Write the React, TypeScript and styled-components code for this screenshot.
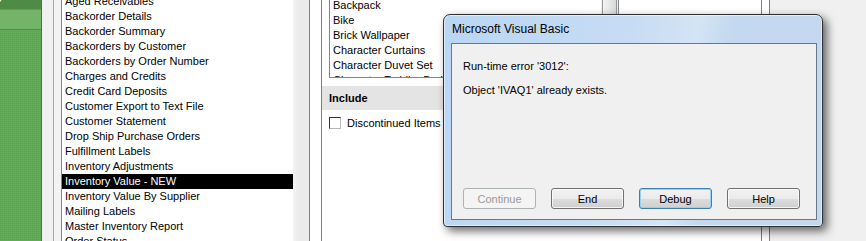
import styled, { createGlobalStyle } from "styled-components";

const GlobalStyle = createGlobalStyle`
  html, body {
    margin: 0;
    padding: 0;
    background: #f0f0f0;
    overflow: hidden;
  }
  body {
    font-family: "Liberation Sans", Arial, sans-serif;
    font-size: 11px;
    color: #000;
  }
  * { box-sizing: border-box; }
`;

const Screen = styled.div`
  position: relative;
  width: 866px;
  height: 241px;
  overflow: hidden;
  display: flex;
  background: #f0f0f0;
`;

/* green nav strip on the far left */
const Sidebar = styled.aside`
  width: 42px;
  flex: none;
  display: flex;
  flex-direction: column;
  border-right: 1px solid #3f7b39;
  background-color: #63aa59;
  background-image: linear-gradient(
      45deg,
      rgba(0, 0, 0, 0.05) 25%,
      transparent 25%,
      transparent 75%,
      rgba(0, 0, 0, 0.05) 75%
    );
  background-size: 2px 2px;
`;

const SideHead = styled.div`
  height: 10px;
  background: #4e8c46;
  border-bottom: 1px solid #5f9d57;
  overflow: hidden;
  color: #fff;
  font-weight: bold;
  font-size: 12px;
  line-height: 12px;
`;

const SideHeadText = styled.div`
  margin: -8px 0 0 -44px;
`;

const SideBand = styled.div`
  height: 20px;
  background: #73b468;
  border-bottom: 1px solid #4f8e48;
`;

const Gutter = styled.div<{ $w: number; $bg?: string }>`
  width: ${(p) => p.$w}px;
  flex: none;
  background: ${(p) => p.$bg ?? "#f0f0f0"};
`;

const ListWell = styled.div`
  flex: none;
  padding-left: 7px;
  border-left: 1px solid #a9a9a9;
  background: #f3f3f3;
`;

const ListBox = styled.div`
  width: 232px;
  height: 100%;
  background: #fff;
  border-left: 1px solid #828790;
  overflow: hidden;
`;

const Rows = styled.div<{ $offset: number }>`
  margin-top: ${(p) => p.$offset}px;
`;

const Row = styled.div<{ $selected?: boolean }>`
  height: 15px;
  line-height: 15px;
  padding-left: 3px;
  white-space: nowrap;
  background: ${(p) => (p.$selected ? "#000" : "transparent")};
  color: ${(p) => (p.$selected ? "#fff" : "#000")};
`;

const GapStrip = styled.div`
  width: 16px;
  flex: none;
  background: linear-gradient(to right, #f4f4f4, #ebebeb 30%, #ececec);
`;

const MidPanel = styled.div`
  flex: none;
  width: 461px;
  background: #fff;
  border-left: 1px solid #7f7f7f;
  border-right: 1px solid #7f7f7f;
  padding: 0 7px 0 11px;
`;

const Group = styled.div`
  height: 100%;
  border-left: 1px solid #7f7f7f;
  border-right: 1px solid #7f7f7f;
  display: flex;
  flex-direction: column;
`;

const ItemList = styled.div`
  margin-left: 7px;
  width: 290px;
  height: 78px;
  flex: none;
  border: 1px solid #828790;
  border-top: none;
  display: flex;
  overflow: hidden;
`;

const ItemRows = styled.div`
  flex: 1;
  margin-top: -2px;
`;

const ScrollTrack = styled.div`
  width: 17px;
  flex: none;
  background: #f0f0f0;
  padding: 0 1px;
`;

const Thumb = styled.div`
  margin-top: -10px;
  height: 50px;
  border: 1px solid #979797;
  border-radius: 2px;
  background: linear-gradient(to right, #f4f4f4, #e6e6e6 50%, #d8d8d8);
`;

const SectionHead = styled.div`
  margin-top: 8px;
  height: 24px;
  line-height: 24px;
  padding-left: 7px;
  background: #e4e4e4;
  font-weight: bold;
`;

const CheckRow = styled.label`
  margin: 7px 0 0 7px;
  display: flex;
  align-items: center;
  gap: 6px;
`;

const CheckBox = styled.span`
  width: 12px;
  height: 12px;
  background: #fff;
  border: 1px solid;
  border-color: #333 #b5b5b5 #b5b5b5 #333;
`;

/* the Visual Basic error window, floating over the form */
const Dialog = styled.div`
  position: absolute;
  left: 443px;
  top: 14px;
  width: 380px;
  height: 213px;
  border: 1px solid #2d2f33;
  border-radius: 7px 7px 4px 4px;
  padding: 0 5px 6px 7px;
  display: flex;
  flex-direction: column;
  background: linear-gradient(
    100deg,
    #b9d6f5 0%,
    #c6dcf3 45%,
    #d3e4f5 62%,
    #c3d9ef 70%,
    #c4d8ee 100%
  );
  box-shadow: inset 0 0 0 1px rgba(255, 255, 255, 0.55),
    4px 4px 10px rgba(0, 0, 0, 0.6);
`;

const TitleBar = styled.div`
  height: 28px;
  flex: none;
  display: flex;
  align-items: center;
  padding-left: 1px;
  font-size: 12px;
  color: #000;
`;

const Content = styled.div`
  flex: 1;
  background: #f0f0f0;
  border: 1px solid #6b7787;
  padding: 16px 10px 10px 11px;
  display: flex;
  flex-direction: column;
`;

const Message = styled.div<{ $gap?: number }>`
  line-height: 13px;
  margin-top: ${(p) => p.$gap ?? 0}px;
`;

const ButtonRow = styled.div`
  margin-top: auto;
  display: flex;
  gap: 15px;
`;

const Button = styled.button<{ $default?: boolean }>`
  width: 73px;
  height: 21px;
  padding: 0;
  font-family: inherit;
  font-size: 11px;
  color: #000;
  border: 1px solid ${(p) => (p.$default ? "#3c7fb1" : "#707070")};
  border-radius: 3px;
  background: linear-gradient(#f2f2f2 0%, #ebebeb 50%, #dddddd 50%, #cfcfcf 100%);
  box-shadow: inset 0 0 0 1px
    ${(p) => (p.$default ? "#8fd3f7" : "rgba(255, 255, 255, 0.75)")};

  &:disabled {
    color: #9a9a9a;
    border-color: #adb2b5;
    background: #f4f4f4;
    box-shadow: none;
  }
`;

const reports = [
  "Aged Receivables",
  "Backorder Details",
  "Backorder Summary",
  "Backorders by Customer",
  "Backorders by Order Number",
  "Charges and Credits",
  "Credit Card Deposits",
  "Customer Export to Text File",
  "Customer Statement",
  "Drop Ship Purchase Orders",
  "Fulfillment Labels",
  "Inventory Adjustments",
  "Inventory Value - NEW",
  "Inventory Value By Supplier",
  "Mailing Labels",
  "Master Inventory Report",
  "Order Status",
];

const items = [
  "Backpack",
  "Bike",
  "Brick Wallpaper",
  "Character Curtains",
  "Character Duvet Set",
  "Character Toddler Bed",
];

export default function App() {
  return (
    <Screen>
      <GlobalStyle />
      <Sidebar>
        <SideHead>
          <SideHeadText>Reports</SideHeadText>
        </SideHead>
        <SideBand />
      </Sidebar>
      <Gutter $w={11} />
      <ListWell>
        <ListBox>
          <Rows $offset={-6}>
            {reports.map((r) => (
              <Row key={r} $selected={r === "Inventory Value - NEW"}>
                {r}
              </Row>
            ))}
          </Rows>
        </ListBox>
      </ListWell>
      <GapStrip />
      <MidPanel>
        <Group>
          <ItemList>
            <ItemRows>
              {items.map((i) => (
                <Row key={i}>{i}</Row>
              ))}
            </ItemRows>
            <ScrollTrack>
              <Thumb />
            </ScrollTrack>
          </ItemList>
          <SectionHead>Include</SectionHead>
          <CheckRow>
            <CheckBox />
            Discontinued Items
          </CheckRow>
        </Group>
      </MidPanel>

      <Dialog>
        <TitleBar>Microsoft Visual Basic</TitleBar>
        <Content>
          <Message>Run-time error '3012':</Message>
          <Message $gap={11}>Object 'IVAQ1' already exists.</Message>
          <ButtonRow>
            <Button disabled>Continue</Button>
            <Button>End</Button>
            <Button $default>Debug</Button>
            <Button>Help</Button>
          </ButtonRow>
        </Content>
      </Dialog>
    </Screen>
  );
}
